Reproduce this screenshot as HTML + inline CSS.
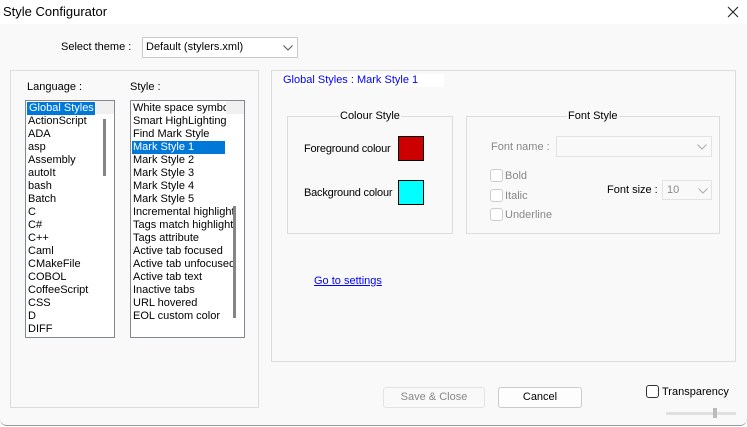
<!DOCTYPE html>
<html><head><style>
*{margin:0;padding:0;box-sizing:border-box}
body{width:747px;height:427px;background:#fff;font-family:"Liberation Sans",sans-serif;font-size:11px;color:#000;position:relative;overflow:hidden}
.a{position:absolute;white-space:nowrap}
#win{position:absolute;left:0;top:0;width:747px;height:426px;background:#f9f9f9;border-bottom:1px solid #999;border-radius:0 0 7px 7px}
#tb{position:absolute;left:0;top:0;width:747px;height:24px;background:#fff}
.grp{position:absolute;border:1px solid #dcdcdc}
.list{position:absolute;background:#fff;border:1px solid #828790;overflow:hidden}
.list div{height:13px;line-height:13px;padding-left:2px;font-size:11px;white-space:nowrap}
.sel{background:#0078d7;color:#fff}
.sb{position:absolute;background:#f0f0f0;top:0;bottom:0;z-index:2}
.th{position:absolute;background:#858585;width:3px}
.combo{position:absolute;border:1px solid #ccc;background:#fff}
.cb{position:absolute;width:13px;height:13px;border:1px solid #ccc;border-radius:3px;background:#fff}
.btn{position:absolute;border:1px solid #ccc;border-radius:3px;background:#fdfdfd;text-align:center;line-height:19px}
.leg{position:absolute;background:#f9f9f9;padding:0 1px}
.g{color:#888}
</style></head><body>
<div id="win"></div>
<div id="tb"></div>
<div class="a" style="left:3px;top:4px;font-size:13px">Style Configurator</div>
<svg class="a" style="left:727px;top:6px" width="12" height="12"><path d="M1 1L11 11M11 1L1 11" stroke="#222" stroke-width="1.1"/></svg>

<div class="a" style="left:61px;top:41px">Select theme :</div>
<div class="combo" style="left:142px;top:37px;width:156px;height:21px;border-color:#c8c8c8"><span class="a" style="left:3px;top:3px">Default (stylers.xml)</span>
<svg class="a" style="left:140px;top:7px" width="10" height="6"><path d="M0.5 0.5L5 5L9.5 0.5" stroke="#555" fill="none"/></svg></div>

<div class="grp" style="left:10px;top:70px;width:249px;height:338px"></div>
<div class="a" style="left:27px;top:81px">Language :</div>
<div class="a" style="left:130px;top:81px">Style :</div>

<div class="list" style="left:25px;top:100px;width:90px;height:238px">
<div style="padding:0;margin-top:1px"><span class="sel" style="display:inline-block;width:68px;padding-left:2px;margin-left:1px">Global Styles</span></div>
<div>ActionScript</div><div>ADA</div><div>asp</div><div>Assembly</div><div>autoIt</div><div>bash</div><div>Batch</div><div>C</div><div>C#</div><div>C++</div><div>Caml</div><div>CMakeFile</div><div>COBOL</div><div>CoffeeScript</div><div>CSS</div><div>D</div><div>DIFF</div>
<div class="sb" style="left:70px;width:18px"><div class="th" style="left:7px;top:18px;height:57px"></div></div>
</div>

<div class="list" style="left:130px;top:100px;width:115px;height:238px">
<div style="margin-top:1px">White space symbol</div><div>Smart HighLighting</div><div>Find Mark Style</div><div class="sel" style="margin-left:1px;width:93px;padding-left:1px">Mark Style 1</div><div>Mark Style 2</div><div>Mark Style 3</div><div>Mark Style 4</div><div>Mark Style 5</div><div>Incremental highlight</div><div>Tags match highlight</div><div>Tags attribute</div><div>Active tab focused</div><div>Active tab unfocused</div><div>Active tab text</div><div>Inactive tabs</div><div>URL hovered</div><div>EOL custom color</div>
<div class="sb" style="left:95px;width:18px"><div class="th" style="left:7px;top:105px;height:112px"></div></div>
</div>

<div class="grp" style="left:271px;top:70px;width:465px;height:292px"></div>
<div class="a" style="left:281px;top:74px;width:163px;height:13px;background:#fff"></div>
<div class="a" style="left:283px;top:74px;color:#0000ff">Global Styles : Mark Style 1</div>

<div class="grp" style="left:287px;top:116px;width:166px;height:118px"></div>
<div class="leg" style="left:339px;top:110px">Colour Style</div>
<div class="a" style="left:304px;top:143px;letter-spacing:-0.2px">Foreground colour</div>
<div class="a" style="left:398px;top:136px;width:26px;height:25px;background:#cc0000;border:1px solid #000"></div>
<div class="a" style="left:304px;top:187px;letter-spacing:-0.2px">Background colour</div>
<div class="a" style="left:398px;top:180px;width:26px;height:25px;background:#00ffff;border:1px solid #000"></div>

<div class="grp" style="left:466px;top:116px;width:254px;height:118px"></div>
<div class="leg" style="left:567px;top:110px">Font Style</div>
<div class="a g" style="left:491px;top:141px">Font name :</div>
<div class="combo" style="left:556px;top:136px;width:156px;height:21px;border-color:#e3e3e3;background:#f9f9f9"><svg class="a" style="left:140px;top:7px" width="10" height="6"><path d="M0.5 0.5L5 5L9.5 0.5" stroke="#aaa" fill="none"/></svg></div>
<div class="cb" style="left:490px;top:169px"></div><div class="a g" style="left:505px;top:170px">Bold</div>
<div class="cb" style="left:490px;top:189px"></div><div class="a g" style="left:505px;top:190px">Italic</div>
<div class="cb" style="left:490px;top:208px"></div><div class="a g" style="left:505px;top:209px">Underline</div>
<div class="a" style="left:607px;top:184px">Font size :</div>
<div class="combo" style="left:662px;top:180px;width:50px;height:20px;border-color:#e3e3e3;background:#f9f9f9"><span class="a g" style="left:4px;top:3px">10</span><svg class="a" style="left:35px;top:7px" width="10" height="6"><path d="M0.5 0.5L5 5L9.5 0.5" stroke="#aaa" fill="none"/></svg></div>

<div class="a" style="left:314px;top:275px;color:#0000ff;text-decoration:underline">Go to settings</div>

<div class="btn g" style="left:383px;top:387px;width:102px;height:21px;border-color:#e3e3e3;background:#f9f9f9">Save &amp; Close</div>
<div class="btn" style="left:498px;top:387px;width:84px;height:21px">Cancel</div>
<div class="cb" style="left:646px;top:385px;border-color:#333"></div>
<div class="a" style="left:662px;top:386px">Transparency</div>
<div class="a" style="left:666px;top:412px;width:70px;height:3px;background:#e0e0e0"></div>
<div class="a" style="left:713px;top:408px;width:4px;height:10px;background:#bbb"></div>
</body></html>
